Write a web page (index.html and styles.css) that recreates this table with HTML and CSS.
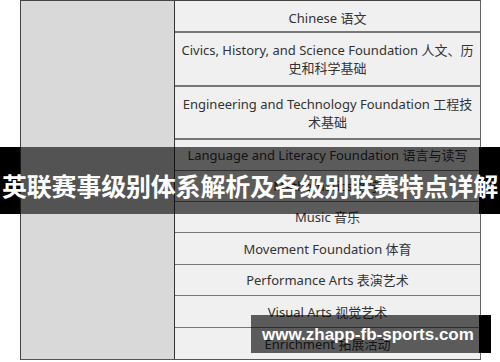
FILE: index.html
```html
<!DOCTYPE html>
<html lang="zh">
<head>
<meta charset="utf-8">
<link rel="stylesheet" href="styles.css">
</head>
<body>
<div class="stage">
  <div class="table">
    <div class="side"></div>
    <div class="col">
      <div class="row first">Chinese 语文</div>
      <div class="row double">Civics, History, and Science Foundation 人文、历史和科学基础</div>
      <div class="row double">Engineering and Technology Foundation 工程技术基础</div>
      <div class="row">Language and Literacy Foundation 语言与读写</div>
      <div class="row">Mathematics 数学</div>
      <div class="row">Music 音乐</div>
      <div class="row tall">Movement Foundation 体育</div>
      <div class="row">Performance Arts 表演艺术</div>
      <div class="row tall">Visual Arts 视觉艺术</div>
      <div class="row">Enrichment 拓展活动</div>
    </div>
  </div>
  <div class="title">英联赛事级别体系解析及各级别联赛特点详解</div>
  <div class="mark">www.zhapp-fb-sports.com</div>
</div>
</body>
</html>
```

FILE: styles.css
```css
html, body {
  margin: 0;
  padding: 0;
  background: #ffffff;
}
.stage {
  position: relative;
  width: 500px;
  height: 362px;
  overflow: hidden;
}
.table {
  display: flex;
  margin-left: 20px;
  width: 459px;
  border-top: 1px solid #444;
  border-left: 1px solid #444;
  border-right: 1px solid #666;
  border-bottom: 1px solid #555;
}
.side {
  width: 153px;
  background: #d9d9d9;
  border-right: 1px solid #333;
}
.col {
  flex: 1;
  background: #f0f0f0;
  display: flex;
  flex-direction: column;
}
.row {
  box-sizing: border-box;
  height: 31px;
  padding: 0 5px;
  border-bottom: 1px solid #777;
  display: flex;
  align-items: center;
  justify-content: center;
  text-align: center;
  font-family: "Noto Sans", "Noto Sans CJK SC", sans-serif;
  font-size: 13px;
  line-height: 18px;
  color: #333;
}
.row.first {
  height: 32px;
  padding-top: 4px;
  border-bottom: 2px solid #777;
}
.row.double {
  height: 54px;
  border-bottom: 2px solid #777;
}
.row.double + .row.double {
  height: 53px;
}
.row.tall {
  height: 32px;
}
.row:last-child {
  border-bottom: none;
}
.title {
  position: absolute;
  left: 0;
  top: 147px;
  width: 500px;
  height: 67px;
  box-sizing: border-box;
  padding-top: 8px;
  display: flex;
  align-items: center;
  justify-content: center;
  background: linear-gradient(to right, #000 0, #000 20px, rgba(0,0,0,0.62) 20px, rgba(0,0,0,0.62) 479px, #000 479px);
  color: #fff;
  font-family: "Noto Sans CJK SC", sans-serif;
  font-weight: 700;
  font-size: 25px;
  white-space: nowrap;
  letter-spacing: -0.2px;
}
.mark {
  position: absolute;
  left: 251px;
  top: 315px;
  width: 240px;
  height: 38px;
  box-sizing: border-box;
  padding-left: 11px;
  padding-top: 2px;
  display: flex;
  align-items: center;
  background: linear-gradient(to right, rgba(0,0,0,0.62) 0, rgba(0,0,0,0.62) 228px, #000 228px);
  color: #fff;
  font-family: "Liberation Sans", Arial, sans-serif;
  font-weight: 700;
  font-size: 17px;
  white-space: nowrap;
}
```
